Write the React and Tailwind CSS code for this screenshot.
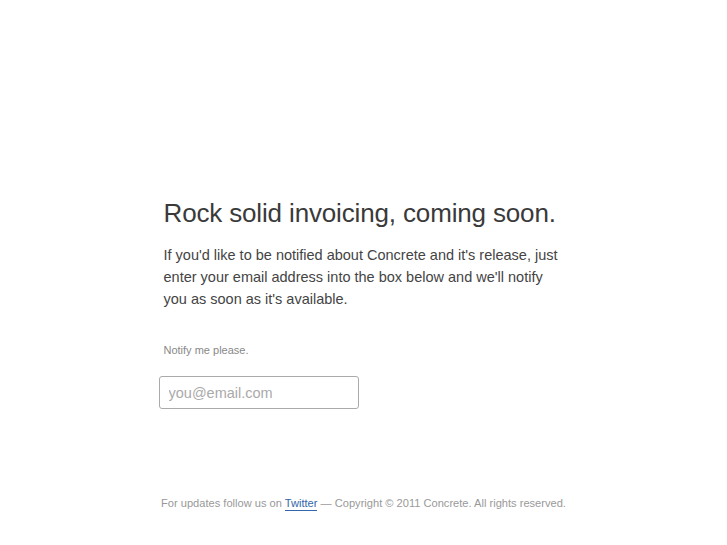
export default function App() {
  return (
    <div className="min-h-[545px] w-full bg-white font-['Liberation_Sans',Arial,sans-serif] flex flex-col items-center">
      <div className="w-[400px] pt-[197px]">
        <h1 className="text-[26px] leading-[32px] text-[#3a3a3a] tracking-[-0.15px]">Rock solid invoicing, coming soon.</h1>
        <p className="mt-[15px] text-[14.5px] leading-[22px] text-[#444]">
          If you'd like to be notified about Concrete and it's release, just enter your email address into the box below and we'll notify you as soon as it's available.
        </p>
        <div className="mt-[33px] text-[11px] leading-[14px] text-[#888]">Notify me please.</div>
        <input
          type="text"
          placeholder="you@email.com"
          className="mt-[19px] -ml-[5px] w-[200px] h-[33px] rounded-[3px] border border-[#aaa] px-[9px] text-[14.5px] text-[#444] placeholder:text-[#aaa] outline-none"
        />
      </div>
      <div className="mt-[87px] text-[11.1px] leading-[14px] text-[#999]">
        For updates follow us on{" "}
        <a href="#" className="text-[#3366aa] border-b border-[#3366aa] pb-[1px]">Twitter</a>{" "}
        — Copyright © 2011 Concrete. All rights reserved.
      </div>
    </div>
  );
}
